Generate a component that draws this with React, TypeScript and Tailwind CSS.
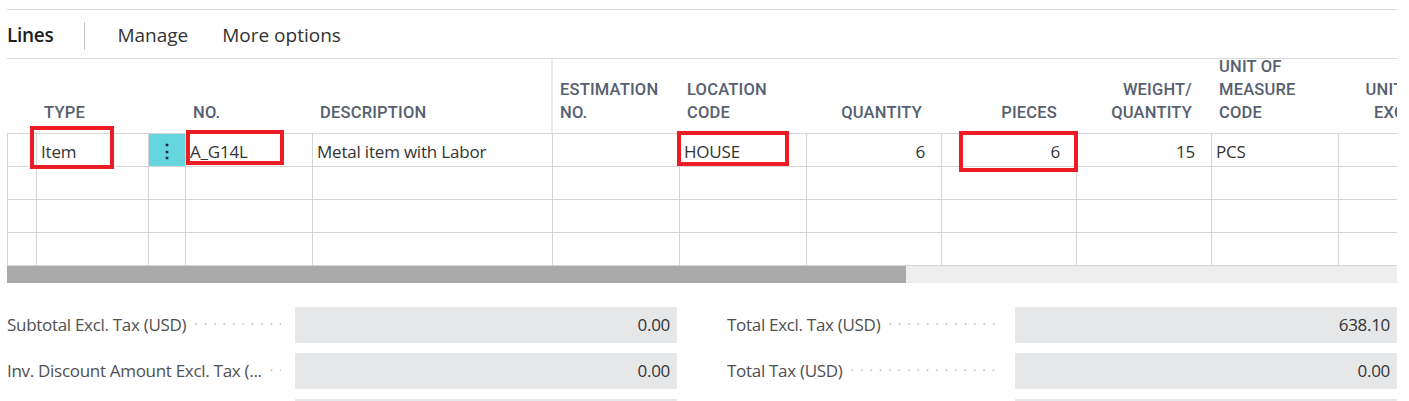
import React from 'react';

type Col = {
  key: string;
  label: string[];
  width: number;
  align: 'left' | 'right';
};

const columns: Col[] = [
  { key: 'sel', label: [], width: 30, align: 'left' },
  { key: 'type', label: ['TYPE'], width: 112, align: 'left' },
  { key: 'menu', label: [], width: 37, align: 'left' },
  { key: 'no', label: ['NO.'], width: 127, align: 'left' },
  { key: 'desc', label: ['DESCRIPTION'], width: 240, align: 'left' },
  { key: 'est', label: ['ESTIMATION', 'NO.'], width: 127, align: 'left' },
  { key: 'loc', label: ['LOCATION', 'CODE'], width: 127, align: 'left' },
  { key: 'qty', label: ['QUANTITY'], width: 135, align: 'right' },
  { key: 'pcs', label: ['PIECES'], width: 135, align: 'right' },
  { key: 'wq', label: ['WEIGHT/', 'QUANTITY'], width: 135, align: 'right' },
  { key: 'uom', label: ['UNIT OF', 'MEASURE', 'CODE'], width: 127, align: 'left' },
  { key: 'price', label: ['UNIT PRICE', 'EXCL. TAX'], width: 127, align: 'right' },
];

const firstRow: Record<string, string> = {
  type: 'Item',
  no: 'A_G14L',
  desc: 'Metal item with Labor',
  loc: 'HOUSE',
  qty: '6',
  pcs: '6',
  wq: '15',
  uom: 'PCS',
};

const bodyFont = { fontFamily: '"Open Sans", "Noto Sans", sans-serif' };
const headFont = { fontFamily: 'Roboto, "Noto Sans", sans-serif' };

const Marker: React.FC<{ className: string }> = ({ className }) => (
  <div className={`absolute border-4 border-[#ed1c24] pointer-events-none ${className}`} />
);

const TotalField: React.FC<{ label: string; value: string }> = ({ label, value }) => (
  <div className="flex items-center h-[36px]">
    <div className="w-[288px] flex items-center overflow-hidden pr-[14px]">
      <span className="text-[17px] text-[#505050] whitespace-nowrap tracking-[-0.3px]">{label}</span>
      <span className="flex-1 min-w-0 overflow-hidden whitespace-nowrap text-[#b8b8b8] text-[13px] tracking-[6px] pl-[8px]">
        {'·'.repeat(30)}
      </span>
    </div>
    <div className="w-[382px] h-full bg-[#e6e7e9] flex items-center justify-end pr-[7px] text-[17px] text-[#333] tracking-[-0.3px]">
      {value}
    </div>
  </div>
);

export default function App() {
  return (
    <div className="w-[1409px] h-[401px] bg-white overflow-hidden pt-[9px] px-[7px]" style={bodyFont}>
      {/* Action bar */}
      <div className="w-[1390px] border-t border-b border-[#dadada] h-[50px] flex items-center pt-[3px]">
        <span className="text-[19px] font-semibold text-[#212121] tracking-[-0.3px]">Lines</span>
        <div className="w-px h-[28px] bg-[#c8c8c8] ml-[31px] mr-[32px]" />
        <span className="text-[19px] text-[#333]">Manage</span>
        <span className="text-[19px] text-[#333] ml-[34px]">More options</span>
      </div>

      {/* Grid */}
      <div className="relative w-[1390px]">
        <div className="w-[1390px] overflow-hidden">
          <div className="flex h-[75px] border-b border-[#d6d6d6]" style={headFont}>
            {columns.map((c) => (
              <div
                key={c.key}
                style={{ width: c.width, minWidth: c.width }}
                className={`flex flex-col justify-end pb-[9px] text-[16.5px] leading-[23px] font-medium text-[#56606f] tracking-[0.2px] ${
                  c.key === 'price'
                    ? 'items-end pr-[12px]'
                    : c.align === 'right'
                      ? 'items-end pr-[20px]'
                      : 'items-start pl-[7px]'
                } ${c.key === 'desc' ? 'border-r-2 border-[#ececec]' : ''}`}
              >
                {c.label.map((l) => (
                  <span key={l} className="whitespace-nowrap">
                    {l}
                  </span>
                ))}
              </div>
            ))}
          </div>

          {[0, 1, 2, 3].map((r) => (
            <div key={r} className="flex h-[33px] border-b border-[#d6d6d6]">
              {columns.map((c, i) => (
                <div
                  key={c.key}
                  style={{ width: c.width, minWidth: c.width }}
                  className={`flex items-center pt-[3px] text-[17px] text-[#333] border-r border-[#d6d6d6] ${
                    i === 0 ? 'border-l' : ''
                  } ${c.align === 'right' ? 'justify-end pr-[16px]' : 'pl-[4px]'} ${
                    r === 0 && c.key === 'menu' ? 'bg-[#65d6dd] justify-center !pl-0 !pt-0' : ''
                  }`}
                >
                  {r === 0 && c.key === 'menu' ? (
                    <span className="text-[#1f2a30] text-[18px] font-bold leading-none">⋮</span>
                  ) : r === 0 ? (
                    <span className="whitespace-nowrap tracking-[-0.2px]">{firstRow[c.key] ?? ''}</span>
                  ) : null}
                </div>
              ))}
            </div>
          ))}

          {/* Horizontal scrollbar */}
          <div className="flex h-[17px] bg-[#eeeeee]">
            <div className="w-[899px] h-full bg-[#aaaaaa]" />
          </div>
        </div>

        <Marker className="left-[23px] top-[67px] w-[84px] h-[43px]" />
        <Marker className="left-[179px] top-[71px] w-[98px] h-[35px]" />
        <Marker className="left-[670px] top-[72px] w-[112px] h-[35px]" />
        <Marker className="left-[952px] top-[72px] w-[119px] h-[41px]" />
      </div>

      {/* Totals */}
      <div className="flex gap-[50px] mt-[24px] w-[1390px]">
        <div className="flex flex-col gap-[10px]">
          <TotalField label="Subtotal Excl. Tax (USD)" value="0.00" />
          <TotalField label="Inv. Discount Amount Excl. Tax (..." value="0.00" />
          <TotalField label="" value="" />
        </div>
        <div className="flex flex-col gap-[10px]">
          <TotalField label="Total Excl. Tax (USD)" value="638.10" />
          <TotalField label="Total Tax (USD)" value="0.00" />
          <TotalField label="" value="" />
        </div>
      </div>
    </div>
  );
}
